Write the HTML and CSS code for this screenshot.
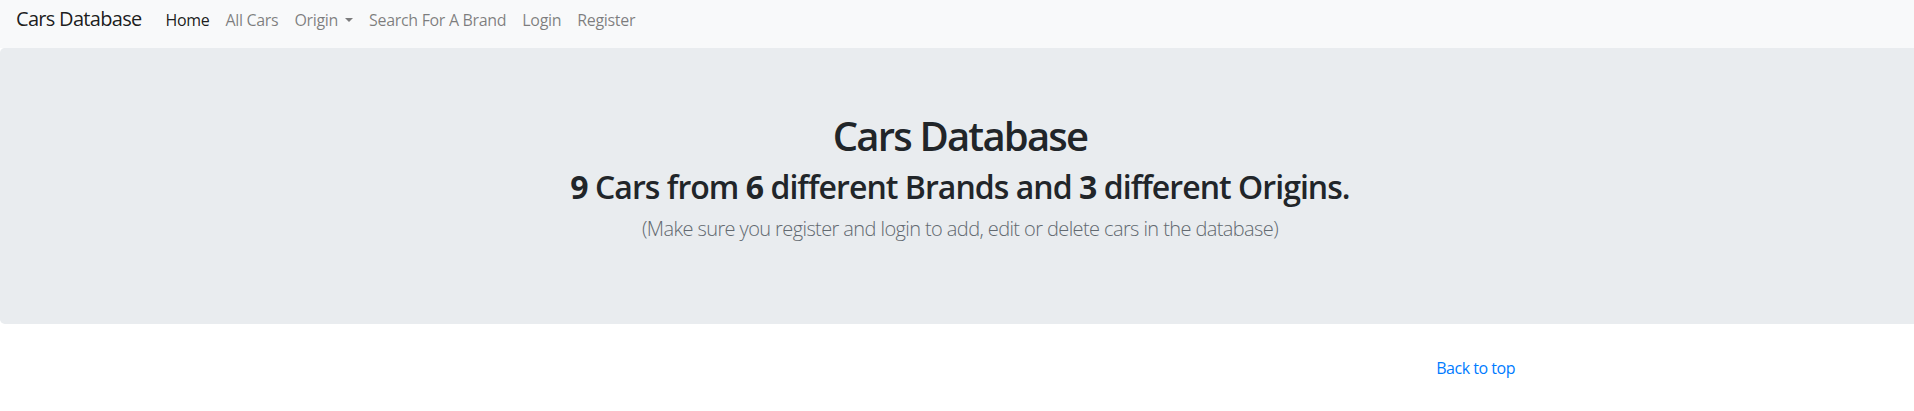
FILE: index.html
```html
<!DOCTYPE html>
<html lang="en">
<head>
<meta charset="utf-8">
<title>Cars Database</title>
<link rel="stylesheet" href="styles.css">
</head>
<body>
<nav class="navbar">
  <a class="brand" href="#">Cars Database</a>
  <ul class="nav">
    <li><a class="nav-link active" href="#">Home</a></li>
    <li><a class="nav-link" href="#">All Cars</a></li>
    <li><a class="nav-link dropdown-toggle" href="#">Origin</a></li>
    <li><a class="nav-link" href="#">Search For A Brand</a></li>
    <li><a class="nav-link" href="#">Login</a></li>
    <li><a class="nav-link" href="#">Register</a></li>
  </ul>
</nav>
<main>
  <section class="jumbotron">
    <h1 class="title">Cars Database</h1>
    <h2 class="subtitle"><b>9</b> Cars from <b>6</b> different Brands and <b>3</b> different Origins.</h2>
    <p class="lead">(Make sure you register and login to add, edit or delete cars in the database)</p>
  </section>
</main>
<footer class="footer">
  <div class="container">
    <a class="top-link" href="#">Back to top</a>
  </div>
</footer>
</body>
</html>
```

FILE: styles.css
```css
* { box-sizing: border-box; }

body {
  margin: 0;
  font-family: "Open Sans", "Noto Sans", sans-serif;
  font-size: 16px;
  line-height: 1.5;
  color: #212529;
  background: #fff;
}

a { text-decoration: none; }

.navbar {
  display: flex;
  align-items: baseline;
  height: 48px;
  padding: 4px 16px 0 16px;
  background: #f8f9fa;
}

.brand {
  font-size: 20px;
  line-height: 30px;
  color: rgba(0, 0, 0, 0.9);
  margin-right: 16px;
  letter-spacing: -0.035em;
}

.nav {
  display: flex;
  list-style: none;
  margin: 0;
  padding: 0;
}

.nav-link {
  display: block;
  padding: 0 8px;
  font-size: 16px;
  line-height: 24px;
  color: rgba(0, 0, 0, 0.5);
  letter-spacing: -0.02em;
}

.nav-link.active { color: rgba(0, 0, 0, 0.9); }

.dropdown-toggle::after {
  content: "";
  display: inline-block;
  margin-left: 7px;
  vertical-align: 4px;
  border-top: 4.8px solid;
  border-right: 4.8px solid transparent;
  border-left: 4.8px solid transparent;
}

.jumbotron {
  background: #e9ecef;
  padding: 64px 26px 64px 32px;
  margin-bottom: 32px;
  border-radius: 4.8px 0 0 4.8px;
  text-align: center;
}

.title {
  margin: 0 0 8px;
  font-size: 40px;
  line-height: 48px;
  font-weight: 600;
  letter-spacing: -0.045em;
}

.subtitle {
  margin: 0 0 8px;
  font-size: 32px;
  line-height: 38.4px;
  font-weight: 600;
  letter-spacing: -0.03em;
}

.subtitle b { font-weight: 700; }

.lead {
  margin: 0 0 16px;
  font-size: 20px;
  line-height: 30px;
  font-weight: 300;
  color: #626970;
  letter-spacing: -0.03em;
}

.container {
  width: 1140px;
  margin-left: calc(50% - 567px);
  padding: 0 15px;
  text-align: right;
}

.top-link {
  color: #007bff;
  font-size: 16px;
  line-height: 24px;
  letter-spacing: -0.03em;
}
```
